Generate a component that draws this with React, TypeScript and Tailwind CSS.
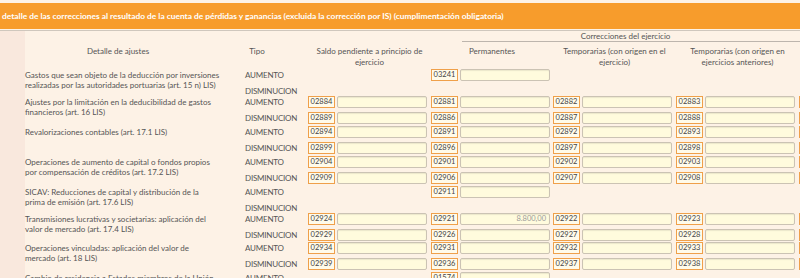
type Cell = string | null;

type Group = {
  desc: string[];
  h: number;
  a: Cell[];
  d: Cell[];
  value?: string;
};

// the fifth column only shows its left edge at the window border
const EDGE = "";

const groups: Group[] = [
  {
    desc: [
      "Gastos que sean objeto de la deducción por inversiones",
      "realizadas por las autoridades portuarias (art. 15 n) LIS)",
    ],
    h: 27,
    a: [null, "03241", null, null, null],
    d: [null, null, null, null, null],
  },
  {
    desc: ["Ajustes por la limitación en la deducibilidad de gastos", "financieros (art. 16 LIS)"],
    h: 30,
    a: ["02884", "02881", "02882", "02883", EDGE],
    d: ["02889", "02886", "02887", "02888", EDGE],
  },
  {
    desc: ["Revalorizaciones contables (art. 17.1 LIS)"],
    h: 30,
    a: ["02894", "02891", "02892", "02893", EDGE],
    d: ["02899", "02896", "02897", "02898", EDGE],
  },
  {
    desc: ["Operaciones de aumento de capital o fondos propios", "por compensación de créditos (art. 17.2 LIS)"],
    h: 30,
    a: ["02904", "02901", "02902", "02903", EDGE],
    d: ["02909", "02906", "02907", "02908", EDGE],
  },
  {
    desc: ["SICAV: Reducciones de capital y distribución de la", "prima de emisión (art. 17.6 LIS)"],
    h: 27,
    a: [null, "02911", null, null, null],
    d: [null, null, null, null, null],
  },
  {
    desc: ["Transmisiones lucrativas y societarias: aplicación del", "valor de mercado (art. 17.4 LIS)"],
    h: 29,
    a: ["02924", "02921", "02922", "02923", EDGE],
    d: ["02929", "02926", "02927", "02928", EDGE],
    value: "8.800,00",
  },
  {
    desc: ["Operaciones vinculadas: aplicación del valor de", "mercado (art. 18 LIS)"],
    h: 30,
    a: ["02934", "02931", "02932", "02933", EDGE],
    d: ["02939", "02936", "02937", "02938", EDGE],
  },
  {
    desc: ["Cambio de residencia a Estados miembros de la Unión", "Europea (art. 19.1 LIS)"],
    h: 30,
    a: [null, "01574", null, null, null],
    d: [null, null, null, null, null],
  },
];

const colWidths = ["w-[123px]", "w-[122px]", "w-[123px]", "w-[123px]", "w-[123px]"];

const Field = ({ code, value, w }: { code: Cell; value?: string; w: string }) => {
  if (code === null) return <div className={`h-[16px] ${w} shrink-0`} />;
  return (
    <div className={`flex h-[16px] ${w} shrink-0 items-start`}>
      <div className="flex h-[12px] w-[27px] items-center justify-center border border-[#efa04a] bg-[#fffbea] text-[7.5px] leading-none text-[#444]">
        {code}
      </div>
      <div className="ml-[2px] flex h-[12px] w-[90px] items-center justify-end rounded-[2px] border border-[#cbc3b4] bg-[#fffbdd] pr-[3px] text-[7.5px] leading-none text-[#9a9a9a] shadow-[inset_0_1px_1px_rgba(0,0,0,0.08)]">
        {value}
      </div>
    </div>
  );
};

const App = () => {
  return (
    <div className="h-[278px] w-[800px] overflow-hidden bg-[#fdf2e6] font-['Lato',sans-serif] text-[#555]">
      <div className="h-[3px]" />
      <div className="flex h-[26px] items-center bg-[#f79c2c] px-[2px] text-[8.4px] font-bold whitespace-nowrap text-white">
        detalle de las correcciones al resultado de la cuenta de pérdidas y ganancias (excluida la corrección por IS) (cumplimentación obligatoria)
      </div>
      <div className="h-px bg-[#fdf2e6]" />
      <div className="h-px bg-[#cfc7bd]" />

      <div className="flex h-[300px]">
        <div className="w-[25px] shrink-0 bg-[#f9e8dd]" />
        <div className="flex w-[900px] shrink-0 flex-col text-[8px]">
          {/* header row 1 */}
          <div className="flex h-[11px] shrink-0">
            <div className="w-[437px] shrink-0" />
            <div className="w-[400px] shrink-0 border-b border-[#bdb5ad]">
              <div className="w-[327px] text-center leading-[10px] whitespace-nowrap">Correcciones del ejercicio</div>
            </div>
          </div>

          {/* header row 2 */}
          <div className="flex h-[27px] shrink-0 pt-[4px] leading-[11px]">
            <div className="w-[186px] shrink-0 text-center">Detalle de ajustes</div>
            <div className="w-[34px] shrink-0" />
            <div className="w-[24px] shrink-0 text-center">Tipo</div>
            <div className="w-[39px] shrink-0" />
            <div className="w-[123px] shrink-0 text-center">
              <div>Saldo pendiente a principio de</div>
              <div>ejercicio</div>
            </div>
            <div className="w-[122px] shrink-0 text-center">Permanentes</div>
            <div className="w-[123px] shrink-0 text-center">
              <div>Temporarias (con origen en el</div>
              <div>ejercicio)</div>
            </div>
            <div className="w-[123px] shrink-0 text-center">
              <div>Temporarias (con origen en</div>
              <div>ejercicios anteriores)</div>
            </div>
          </div>

          {/* body */}
          {groups.map((g, i) => (
            <div key={i} className="flex shrink-0" style={{ height: g.h }}>
              <div className="w-[220px] shrink-0 pt-[0.5px] leading-[10.6px]">
                {g.desc.map((l) => (
                  <div key={l} className="whitespace-nowrap">
                    {l}
                  </div>
                ))}
              </div>
              <div className="w-[63px] shrink-0 leading-[12px] tracking-[-0.2px]">
                <div className="h-[16px]">AUMENTO</div>
                <div className="h-[16px]">DISMINUCION</div>
              </div>
              {g.a.map((c, j) => (
                <div key={j} className="flex flex-col">
                  <Field code={c} w={colWidths[j]} value={j === 1 ? g.value : undefined} />
                  <Field code={g.d[j]} w={colWidths[j]} />
                </div>
              ))}
            </div>
          ))}
        </div>
      </div>
    </div>
  );
};

export default App;
